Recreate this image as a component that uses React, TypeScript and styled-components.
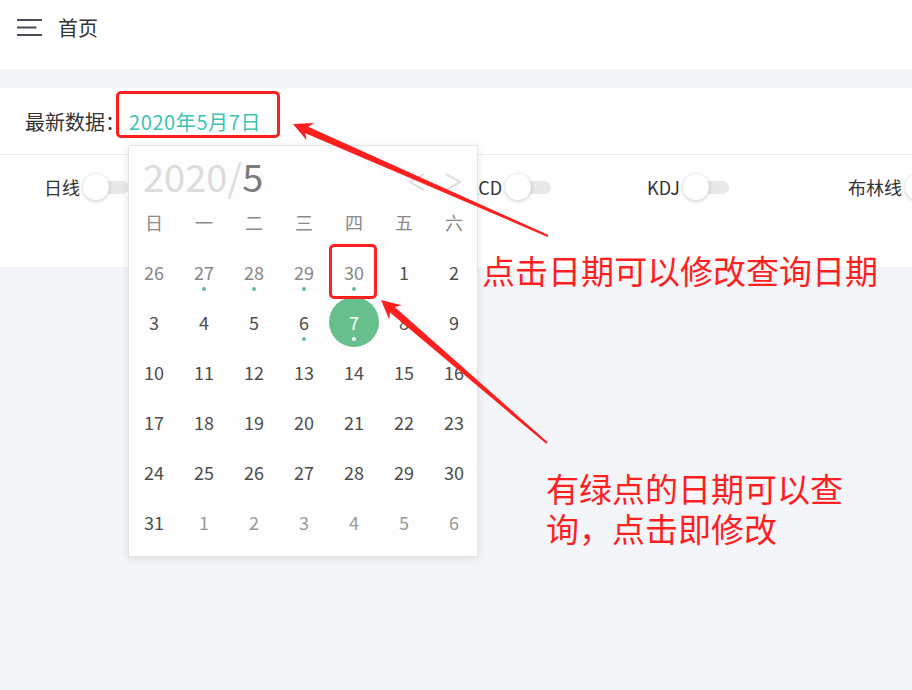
import React from "react";
import styled, { createGlobalStyle } from "styled-components";

const GlobalStyle = createGlobalStyle`
  html, body { margin: 0; padding: 0; background: #f4f5f9; }
  body { font-family: "Noto Sans CJK SC", "Noto Sans", sans-serif; }
  * { box-sizing: border-box; }
`;

const Page = styled.div`
  position: relative;
  width: 912px;
  height: 690px;
  overflow: hidden;
  background: #f4f5f9;
`;

const Header = styled.header`
  background: #fff;
  height: 69px;
  padding: 0 17px;
`;

const HeaderBar = styled.div`
  height: 55px;
  display: flex;
  align-items: center;
  gap: 16px;
  font-size: 20px;
  color: #333;
`;

const Card = styled.section`
  position: relative;
  margin-top: 19px;
  background: #fff;
`;

const DateRow = styled.div`
  height: 67px;
  display: flex;
  align-items: center;
  padding-left: 25px;
  border-bottom: 1px solid #ededed;
  font-size: 20px;
  color: #333;
`;

const DateValue = styled.span`
  margin-left: 4px;
  color: #3cc3b2;
  letter-spacing: 0.6px;
`;

const SwitchRow = styled.div`
  height: 112px;
  display: grid;
  grid-template-columns: 201px 208px 194px 201px 201px;
  padding: 19px 0 0 44px;
  align-items: start;
`;

const SwitchItem = styled.div`
  display: flex;
  align-items: center;
  gap: 3px;
  height: 26px;
  font-size: 18px;
  color: #333;
  white-space: nowrap;
`;

const Switch = styled.span`
  position: relative;
  flex: none;
  width: 46px;
  height: 26px;
  &::before {
    content: "";
    position: absolute;
    left: 0;
    right: 0;
    top: 7px;
    height: 13px;
    border-radius: 7px;
    background: #e8e8e8;
  }
  &::after {
    content: "";
    position: absolute;
    left: 0;
    top: 0;
    width: 26px;
    height: 26px;
    border-radius: 50%;
    background: #fff;
    box-shadow: 0 1px 4px rgba(0, 0, 0, 0.22);
  }
`;

const Calendar = styled.div`
  position: absolute;
  top: 57px;
  left: 128px;
  width: 350px;
  background: #fdfdfd;
  border: 1px solid #e4e4e4;
  box-shadow: 0 2px 8px rgba(0, 0, 0, 0.1);
  padding-bottom: 9px;
`;

const CalHeader = styled.div`
  height: 51px;
  display: flex;
  align-items: flex-start;
  justify-content: space-between;
  padding: 11px 15px 0 14px;
`;

const Title = styled.div`
  font-size: 38px;
  line-height: 38px;
  color: #dcdcdc;
`;

const Month = styled.span`
  color: #7c7c7c;
`;

const Nav = styled.div`
  display: flex;
  gap: 20px;
  padding-top: 16px;
`;

const Grid = styled.div`
  display: grid;
  grid-template-columns: repeat(7, 50px);
  grid-auto-rows: 50px;
`;

const WeekDay = styled.div`
  display: flex;
  align-items: center;
  justify-content: center;
  font-size: 18px;
  color: #8a8a8a;
`;

type Tone = "prev" | "cur" | "next";

const Day = styled.div<{ $tone: Tone; $selected?: boolean }>`
  position: relative;
  display: flex;
  align-items: center;
  justify-content: center;
  font-size: 18px;
  border-radius: 50%;
  color: ${(p) =>
    p.$selected ? "#fff" : p.$tone === "cur" ? "#4d4d4d" : p.$tone === "prev" ? "#888" : "#999"};
  background: ${(p) => (p.$selected ? "#67bf8d" : "transparent")};
`;

const Dot = styled.span<{ $light?: boolean }>`
  position: absolute;
  left: 23px;
  top: 40px;
  width: 4px;
  height: 4px;
  border-radius: 50%;
  background: ${(p) => (p.$light ? "#fff" : "#67bf8d")};
`;

const Callout = styled.div<{ $x: number; $y: number; $w: number; $h: number }>`
  position: absolute;
  left: ${(p) => p.$x}px;
  top: ${(p) => p.$y}px;
  width: ${(p) => p.$w}px;
  height: ${(p) => p.$h}px;
  border: 3px solid #ff1f1f;
  border-radius: 5px;
  pointer-events: none;
`;

const Note = styled.div<{ $x: number; $y: number; $w: number }>`
  position: absolute;
  left: ${(p) => p.$x}px;
  top: ${(p) => p.$y}px;
  width: ${(p) => p.$w}px;
  font-size: 33px;
  line-height: 40px;
  color: #ff1f1f;
`;

const Overlay = styled.svg`
  position: absolute;
  left: 0;
  top: 0;
  pointer-events: none;
`;

type Pt = [number, number];

function arrowPoints(tip: Pt, tail: Pt): string {
  const dx = tail[0] - tip[0];
  const dy = tail[1] - tip[1];
  const len = Math.hypot(dx, dy);
  const d: Pt = [dx / len, dy / len];
  const n: Pt = [-d[1], d[0]];
  const L = 19;
  const hw = 9.5;
  const sw = 3.6;
  const tw = 1;
  const at = (base: Pt, along: number, side: number): string =>
    `${(base[0] + d[0] * along + n[0] * side).toFixed(1)},${(base[1] + d[1] * along + n[1] * side).toFixed(1)}`;
  return [
    at(tip, 0, 0),
    at(tip, L, hw),
    at(tip, L - 4, sw),
    at(tail, 0, tw),
    at(tail, 0, -tw),
    at(tip, L - 4, -sw),
    at(tip, L, -hw),
  ].join(" ");
}

const Hamburger = () => (
  <svg width="25" height="18" viewBox="0 0 25 18">
    <rect x="0" y="0" width="25" height="2" fill="#474d55" />
    <rect x="0" y="7.5" width="19.5" height="2" fill="#474d55" />
    <rect x="0" y="15" width="25" height="2" fill="#474d55" />
  </svg>
);

const Chevron = ({ dir }: { dir: "l" | "r" }) => (
  <svg width="17" height="18" viewBox="0 0 17 18">
    <polyline
      points={dir === "l" ? "16,1 2,9 16,17" : "1,1 15,9 1,17"}
      fill="none"
      stroke="#dcdcdc"
      strokeWidth="2"
    />
  </svg>
);

type Cell = { d: number; tone: Tone; dot?: boolean; sel?: boolean };

const weeks: Cell[][] = (() => {
  const rows: Cell[][] = [];
  const first: Cell[] = [26, 27, 28, 29, 30].map((d) => ({ d, tone: "prev" as Tone, dot: d !== 26 }));
  first.push({ d: 1, tone: "cur" }, { d: 2, tone: "cur" });
  rows.push(first);
  let day = 3;
  for (let r = 0; r < 4; r++) {
    const row: Cell[] = [];
    for (let c = 0; c < 7; c++) {
      row.push({ d: day, tone: "cur", dot: day === 6 || day === 7, sel: day === 7 });
      day++;
    }
    rows.push(row);
  }
  const last: Cell[] = [{ d: 31, tone: "cur" }];
  for (let i = 1; i <= 6; i++) last.push({ d: i, tone: "next" });
  rows.push(last);
  return rows;
})();

const switches = ["日线", "", "MACD", "KDJ", "布林线"];

export default function App() {
  return (
    <>
      <GlobalStyle />
      <Page>
        <Header>
          <HeaderBar>
            <Hamburger />
            <span>首页</span>
          </HeaderBar>
        </Header>
        <Card>
          <DateRow>
            <span>最新数据：</span>
            <DateValue>2020年5月7日</DateValue>
          </DateRow>
          <SwitchRow>
            {switches.map((s, i) =>
              s ? (
                <SwitchItem key={i}>
                  {s}
                  <Switch />
                </SwitchItem>
              ) : (
                <div key={i} />
              )
            )}
          </SwitchRow>
          <Calendar>
            <CalHeader>
              <Title>
                2020/<Month>5</Month>
              </Title>
              <Nav>
                <Chevron dir="l" />
                <Chevron dir="r" />
              </Nav>
            </CalHeader>
            <Grid>
              {["日", "一", "二", "三", "四", "五", "六"].map((w) => (
                <WeekDay key={w}>{w}</WeekDay>
              ))}
              {weeks.flat().map((c, i) => (
                <Day key={i} $tone={c.tone} $selected={c.sel}>
                  {c.d}
                  {c.dot && <Dot $light={c.sel} />}
                </Day>
              ))}
            </Grid>
          </Calendar>
        </Card>

        <Callout $x={116} $y={91} $w={164} $h={47} />
        <Callout $x={329} $y={244} $w={48} $h={55} />
        <Overlay width="912" height="690" viewBox="0 0 912 690">
          <polygon points={arrowPoints([293, 124], [548, 236])} fill="#ff1f1f" />
          <polygon points={arrowPoints([381, 300], [547, 443])} fill="#ff1f1f" />
        </Overlay>
        <Note $x={482} $y={250} $w={420}>点击日期可以修改查询日期</Note>
        <Note $x={546} $y={468} $w={305}>有绿点的日期可以查询，点击即修改</Note>
      </Page>
    </>
  );
}
